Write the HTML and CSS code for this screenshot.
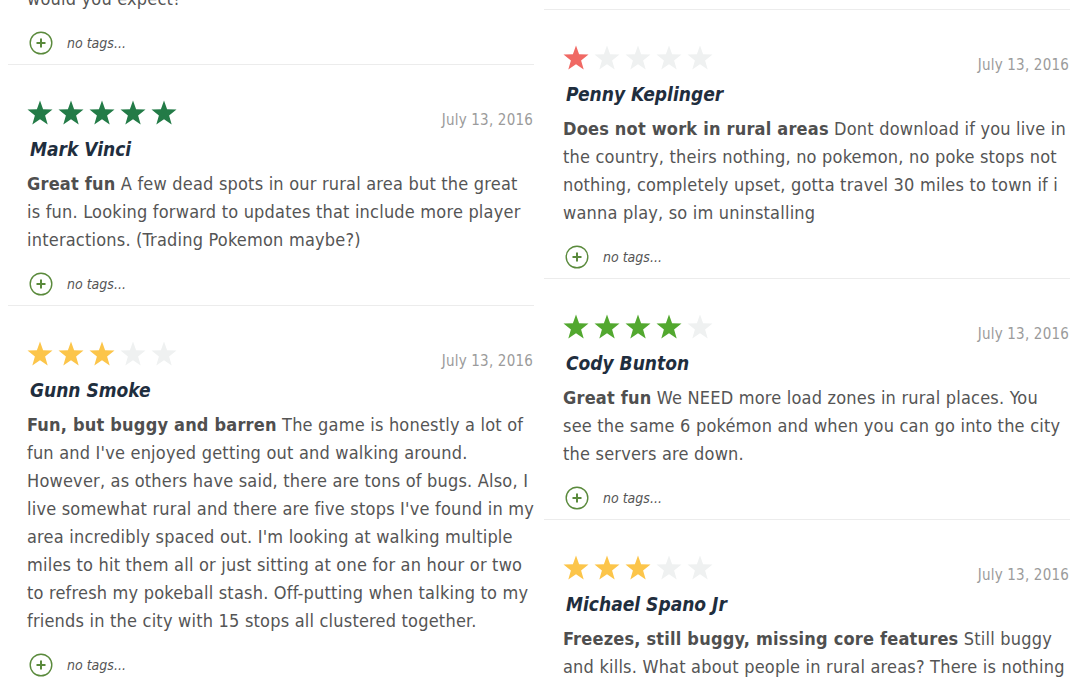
FILE: index.html
```html
<!DOCTYPE html>
<html lang="en">
<head>
<meta charset="utf-8">
<title>Reviews</title>
<link rel="stylesheet" href="styles.css">
</head>
<body>
<svg class="defs" width="0" height="0" aria-hidden="true">
  <defs>
    <symbol id="star" viewBox="0 0 26 25">
      <polygon points="13,0.5 16.1,9.3 25.5,9.6 18.1,15.4 20.7,24.5 13,19.2 5.3,24.5 7.9,15.4 0.5,9.6 9.9,9.3"/>
    </symbol>
    <symbol id="plus" viewBox="0 0 24 24">
      <circle cx="12" cy="12" r="10.8" fill="none" stroke="currentColor" stroke-width="1.4"/>
      <path d="M12 7.5v9M7.5 12h9" fill="none" stroke="currentColor" stroke-width="2"/>
    </symbol>
  </defs>
</svg>

<main class="columns">
  <section class="col col-left">
    <article class="card card-tail">
      <p class="text">would you expect!</p>
      <div class="tags"><svg class="tag-icon"><use href="#plus"/></svg><span>no tags...</span></div>
    </article>

    <article class="card">
      <div class="head">
        <div class="stars s5">
          <svg class="on"><use href="#star"/></svg><svg class="on"><use href="#star"/></svg><svg class="on"><use href="#star"/></svg><svg class="on"><use href="#star"/></svg><svg class="on"><use href="#star"/></svg>
        </div>
        <span class="date">July 13, 2016</span>
      </div>
      <h3 class="name">Mark Vinci</h3>
      <p class="text"><b>Great fun</b> A few dead spots in our rural area but the great is fun. Looking forward to updates that include more player interactions. (Trading Pokemon maybe?)</p>
      <div class="tags"><svg class="tag-icon"><use href="#plus"/></svg><span>no tags...</span></div>
    </article>

    <article class="card">
      <div class="head">
        <div class="stars s3">
          <svg class="on"><use href="#star"/></svg><svg class="on"><use href="#star"/></svg><svg class="on"><use href="#star"/></svg><svg class="off"><use href="#star"/></svg><svg class="off"><use href="#star"/></svg>
        </div>
        <span class="date">July 13, 2016</span>
      </div>
      <h3 class="name">Gunn Smoke</h3>
      <p class="text"><b>Fun, but buggy and barren</b> The game is honestly a lot of fun and I've enjoyed getting out and walking around. However, as others have said, there are tons of bugs. Also, I live somewhat rural and there are five stops I've found in my area incredibly spaced out. I'm looking at walking multiple miles to hit them all or just sitting at one for an hour or two to refresh my pokeball stash. Off-putting when talking to my friends in the city with 15 stops all clustered together.</p>
      <div class="tags"><svg class="tag-icon"><use href="#plus"/></svg><span>no tags...</span></div>
    </article>
  </section>

  <section class="col col-right">
    <article class="card">
      <div class="head">
        <div class="stars s1">
          <svg class="on"><use href="#star"/></svg><svg class="off"><use href="#star"/></svg><svg class="off"><use href="#star"/></svg><svg class="off"><use href="#star"/></svg><svg class="off"><use href="#star"/></svg>
        </div>
        <span class="date">July 13, 2016</span>
      </div>
      <h3 class="name">Penny Keplinger</h3>
      <p class="text"><b>Does not work in rural areas</b> Dont download if you live in the country, theirs nothing, no pokemon, no poke stops not nothing, completely upset, gotta travel 30 miles to town if i wanna play, so im uninstalling</p>
      <div class="tags"><svg class="tag-icon"><use href="#plus"/></svg><span>no tags...</span></div>
    </article>

    <article class="card">
      <div class="head">
        <div class="stars s4">
          <svg class="on"><use href="#star"/></svg><svg class="on"><use href="#star"/></svg><svg class="on"><use href="#star"/></svg><svg class="on"><use href="#star"/></svg><svg class="off"><use href="#star"/></svg>
        </div>
        <span class="date">July 13, 2016</span>
      </div>
      <h3 class="name">Cody Bunton</h3>
      <p class="text"><b>Great fun</b> We NEED more load zones in rural places. You see the same 6 pokémon and when you can go into the city the servers are down.</p>
      <div class="tags"><svg class="tag-icon"><use href="#plus"/></svg><span>no tags...</span></div>
    </article>

    <article class="card">
      <div class="head">
        <div class="stars s3">
          <svg class="on"><use href="#star"/></svg><svg class="on"><use href="#star"/></svg><svg class="on"><use href="#star"/></svg><svg class="off"><use href="#star"/></svg><svg class="off"><use href="#star"/></svg>
        </div>
        <span class="date">July 13, 2016</span>
      </div>
      <h3 class="name">Michael Spano Jr</h3>
      <p class="text"><b>Freezes, still buggy, missing core features</b> Still buggy and kills. What about people in rural areas? There is nothing to do and no stops or gyms anywhere near us, please add more.</p>
      <div class="tags"><svg class="tag-icon"><use href="#plus"/></svg><span>no tags...</span></div>
    </article>
  </section>
</main>
</body>
</html>
```

FILE: styles.css
```css
html, body {
  margin: 0;
  padding: 0;
  background: #ffffff;
}

body {
  font-family: "DejaVu Sans Condensed", "DejaVu Sans", sans-serif;
  color: #555555;
  overflow: hidden;
  height: 682px;
}

.defs {
  position: absolute;
  width: 0;
  height: 0;
  overflow: hidden;
}

.columns {
  display: flex;
  align-items: flex-start;
  gap: 10px;
  padding: 0 10px 0 8px;
}

.col {
  width: 526px;
  flex: none;
}

.col-left {
  margin-top: -15px;
}

.col-right {
  margin-top: 9px;
}

.card {
  border-top: 1px solid #ececec;
  padding: 34px 1px 9px 19px;
}

.card-tail {
  border-top: none;
  padding-top: 0;
}

.head {
  display: flex;
  justify-content: space-between;
  align-items: flex-start;
  height: 26px;
}

.stars {
  display: flex;
  gap: 5px;
  height: 26px;
  align-items: center;
}

.stars svg {
  width: 26px;
  height: 25px;
  display: block;
}

.stars .off { fill: #eff1f1; }
.s5 .on { fill: #237b47; }
.s4 .on { fill: #52a82f; }
.s3 .on { fill: #fcc54a; }
.s1 .on { fill: #f06964; }

.date {
  margin-top: 12px;
  font-size: 15px;
  line-height: 18px;
  letter-spacing: 0.2px;
  color: #9b9b9b;
}

.name {
  margin: 12px 0 0 0;
  font-size: 19px;
  line-height: 24px;
  font-weight: bold;
  font-style: italic;
  color: #1f2e3e;
  padding-left: 3px;
}

.text {
  margin: 9px -2px 0 0;
  font-size: 18px;
  line-height: 28px;
  letter-spacing: 0.2px;
  color: #555555;
}

.card-tail .text {
  margin-top: 0;
}

.text b {
  color: #4f4f4f;
}

.tags {
  margin-top: 18px;
  display: flex;
  align-items: center;
  gap: 14px;
  height: 24px;
  padding-left: 2px;
}

.tag-icon {
  width: 24px;
  height: 24px;
  color: #5a8a3c;
  display: block;
}

.tags span {
  font-size: 14px;
  font-style: italic;
  color: #555555;
}
```
